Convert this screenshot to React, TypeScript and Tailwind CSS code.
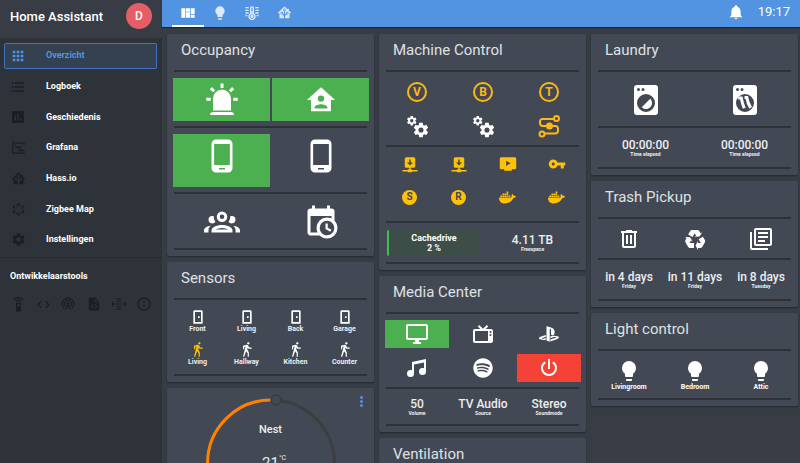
import type { ReactNode } from "react";
import { FaDocker, FaPlaystation, FaSpotify } from "react-icons/fa";
import { MdApps, MdCode, MdFormatListBulleted, MdInfoOutline, MdVpnKey } from "react-icons/md";
import { SiGraphql } from "react-icons/si";

const P = {
  cog: "M12,15.5A3.5,3.5 0 0,1 8.5,12A3.5,3.5 0 0,1 12,8.5A3.5,3.5 0 0,1 15.5,12A3.5,3.5 0 0,1 12,15.5M19.43,12.97C19.47,12.65 19.5,12.33 19.5,12C19.5,11.67 19.47,11.34 19.43,11L21.54,9.37C21.73,9.22 21.78,8.95 21.66,8.73L19.66,5.27C19.54,5.05 19.27,4.96 19.05,5.05L16.56,6.05C16.04,5.66 15.5,5.32 14.87,5.07L14.5,2.42C14.46,2.18 14.25,2 14,2H10C9.75,2 9.54,2.18 9.5,2.42L9.13,5.07C8.5,5.32 7.96,5.66 7.44,6.05L4.95,5.05C4.73,4.96 4.46,5.05 4.34,5.27L2.34,8.73C2.21,8.95 2.27,9.22 2.46,9.37L4.57,11C4.53,11.34 4.5,11.67 4.5,12C4.5,12.33 4.53,12.65 4.57,12.97L2.46,14.63C2.27,14.78 2.21,15.05 2.34,15.27L4.34,18.73C4.46,18.95 4.73,19.03 4.95,18.95L7.44,17.94C7.96,18.34 8.5,18.68 9.13,18.93L9.5,21.58C9.54,21.82 9.75,22 10,22H14C14.25,22 14.46,21.82 14.5,21.58L14.87,18.93C15.5,18.67 16.04,18.34 16.56,17.94L19.05,18.95C19.27,19.03 19.54,18.95 19.66,18.73L21.66,15.27C21.78,15.05 21.73,14.78 21.54,14.63L19.43,12.97Z",
  bulb: "M12,2A7,7 0 0,0 5,9C5,11.38 6.19,13.47 8,14.74V17A1,1 0 0,0 9,18H15A1,1 0 0,0 16,17V14.74C17.81,13.47 19,11.38 19,9A7,7 0 0,0 12,2M9,21A1,1 0 0,0 10,22H14A1,1 0 0,0 15,21V20H9V21Z",
  bell: "M21,19V20H3V19L5,17V11C5,7.9 7.03,5.17 10,4.29C10,4.19 10,4.1 10,4A2,2 0 0,1 12,2A2,2 0 0,1 14,4C14,4.1 14,4.19 14,4.29C16.97,5.17 19,7.9 19,11V17L21,19M14,21A2,2 0 0,1 12,23A2,2 0 0,1 10,21",
  homeAccount: "M12,3L2,12H5V20H19V12H22L12,3M12,8.75A2.25,2.25 0 0,1 14.25,11A2.25,2.25 0 0,1 12,13.25A2.25,2.25 0 0,1 9.75,11A2.25,2.25 0 0,1 12,8.75M12,15C13.5,15 16.5,15.75 16.5,17.25V18H7.5V17.25C7.5,15.75 10.5,15 12,15Z",
  phone: "M17.25,18H6.75V4H17.25M14,21H10V20H14M16,1H8A3,3 0 0,0 5,4V20A3,3 0 0,0 8,23H16A3,3 0 0,0 19,20V4A3,3 0 0,0 16,1Z",
  group: "M12,5A3.5,3.5 0 0,0 8.5,8.5A3.5,3.5 0 0,0 12,12A3.5,3.5 0 0,0 15.5,8.5A3.5,3.5 0 0,0 12,5M12,7A1.5,1.5 0 0,1 13.5,8.5A1.5,1.5 0 0,1 12,10A1.5,1.5 0 0,1 10.5,8.5A1.5,1.5 0 0,1 12,7M5.5,8A2.5,2.5 0 0,0 3,10.5C3,11.44 3.53,12.25 4.29,12.68C4.65,12.88 5.06,13 5.5,13C5.94,13 6.35,12.88 6.71,12.68C7.08,12.47 7.39,12.17 7.62,11.81C6.89,10.86 6.5,9.7 6.5,8.5C6.5,8.41 6.5,8.31 6.5,8.22C6.2,8.08 5.86,8 5.5,8M18.5,8C18.14,8 17.8,8.08 17.5,8.22C17.5,8.31 17.5,8.41 17.5,8.5C17.5,9.7 17.11,10.86 16.38,11.81C16.5,12 16.63,12.15 16.78,12.3C16.94,12.45 17.1,12.58 17.29,12.68C17.65,12.88 18.06,13 18.5,13C18.94,13 19.35,12.88 19.71,12.68C20.47,12.25 21,11.44 21,10.5A2.5,2.5 0 0,0 18.5,8M12,14C9.66,14 5,15.17 5,17.5V19H19V17.5C19,15.17 14.34,14 12,14M4.71,14.55C2.78,14.78 0,15.76 0,17.5V19H3V17.07C3,16.06 3.69,15.22 4.71,14.55M19.29,14.55C20.31,15.22 21,16.06 21,17.07V19H24V17.5C24,15.76 21.22,14.78 19.29,14.55M12,16C13.53,16 15.24,16.5 16.23,17H7.77C8.76,16.5 10.47,16 12,16Z",
  calendarClock: "M15,13H16.5V15.82L18.94,17.23L18.19,18.53L15,16.69V13M19,8H5V19H9.67C9.24,18.09 9,17.07 9,16A7,7 0 0,1 16,9C17.07,9 18.09,9.24 19,9.67V8M5,21C3.89,21 3,20.1 3,19V5C3,3.89 3.89,3 5,3H6V1H8V3H16V1H18V3H19A2,2 0 0,1 21,5V11.1C22.24,12.36 23,14.09 23,16A7,7 0 0,1 16,23C14.09,23 12.36,22.24 11.1,21H5M16,11.15A4.85,4.85 0 0,0 11.15,16C11.15,18.68 13.32,20.85 16,20.85A4.85,4.85 0 0,0 20.85,16C20.85,13.32 18.68,11.15 16,11.15Z",
  walk: "M14.12,10H19V8.2H15.38L13.38,4.87C13.08,4.37 12.54,4.03 11.92,4.03C11.74,4.03 11.58,4.06 11.42,4.11L6,5.8V11H7.8V7.33L9.91,6.67L6,22H7.8L10.67,13.89L13,17V22H14.8V15.59L12.31,11.05L13.04,8.18M14,3.8C15,3.8 15.8,3 15.8,2C15.8,1 15,0.2 14,0.2C13,0.2 12.2,1 12.2,2C12.2,3 13,3.8 14,3.8Z",
  door: "M7,2C5.9,2 5,2.9 5,4V22H19V4C19,2.9 18.1,2 17,2H7M7.500,4.500H16.500V19.500H7.500V4.500M12,11V13.500H14.500V11H12Z",
  alarm: "M6,6.9L3.87,4.78L5.28,3.37L7.4,5.5L6,6.9M13,1V4H11V1H13M20.13,4.78L18,6.9L16.6,5.5L18.72,3.37L20.13,4.78M4.5,10.5V12.5H1.5V10.5H4.5M19.5,10.5H22.5V12.5H19.5V10.5M6,20H18A2,2 0 0,1 20,22H4A2,2 0 0,1 6,20M12,5A6,6 0 0,1 18,11V19H6V11A6,6 0 0,1 12,5Z",
  recycle: "M21.82,15.42L19.32,19.75C18.83,20.61 17.92,21.06 17,21H15V23L12.5,18.5L15,14V16H17.82L15.6,12.15L19.93,9.65L21.73,12.77C22.25,13.54 22.32,14.57 21.82,15.42M9.21,3.06H14.21C15.19,3.06 16.04,3.63 16.45,4.45L17.45,6.19L19.18,5.19L16.54,9.6L11.39,9.69L13.12,8.69L11.71,6.24L9.5,10.09L5.16,7.59L6.96,4.47C7.37,3.64 8.22,3.06 9.21,3.06M5.05,19.76L2.55,15.43C2.06,14.58 2.13,13.56 2.64,12.79L3.64,11.06L1.91,10.06L7.05,10.14L9.7,14.56L7.97,13.56L6.56,16H11V21H7.4C6.47,21.07 5.55,20.61 5.05,19.76Z",
  trash: "M9,3V4H4V6H5V19A2,2 0 0,0 7,21H17A2,2 0 0,0 19,19V6H20V4H15V3H9M7,6H17V19H7V6M9,8V17H11V8H9M13,8V17H15V8H13Z",
  papers: "M16,15H9V13H16V15M19,11H9V9H19V11M19,7H9V5H19V7M3,5V21H19V23H3A2,2 0 0,1 1,21V5H3M21,1A2,2 0 0,1 23,3V17C23,18.11 22.11,19 21,19H7A2,2 0 0,1 5,17V3C5,1.89 5.89,1 7,1H21M7,3V17H21V3H7Z",
  washer: "M14.83,11.17C16.39,12.73 16.39,15.27 14.83,16.83C13.27,18.39 10.73,18.39 9.17,16.83L14.83,11.17M6,2H18A2,2 0 0,1 20,4V20A2,2 0 0,1 18,22H6A2,2 0 0,1 4,20V4A2,2 0 0,1 6,2M7,4A1,1 0 0,0 6,5A1,1 0 0,0 7,6A1,1 0 0,0 8,5A1,1 0 0,0 7,4M10,4A1,1 0 0,0 9,5A1,1 0 0,0 10,6A1,1 0 0,0 11,5A1,1 0 0,0 10,4M12,8A6,6 0 0,0 6,14A6,6 0 0,0 12,20A6,6 0 0,0 18,14A6,6 0 0,0 12,8Z",
  dryer: "M6,2H18A2,2 0 0,1 20,4V20A2,2 0 0,1 18,22H6A2,2 0 0,1 4,20V4A2,2 0 0,1 6,2M7,4A1,1 0 0,0 6,5A1,1 0 0,0 7,6A1,1 0 0,0 8,5A1,1 0 0,0 7,4M10,4A1,1 0 0,0 9,5A1,1 0 0,0 10,6A1,1 0 0,0 11,5A1,1 0 0,0 10,4M12,8A6,6 0 0,0 6,14A6,6 0 0,0 12,20A6,6 0 0,0 18,14A6,6 0 0,0 12,8Z",
  power: "M16.56,5.44L15.11,6.89C16.84,7.94 18,9.83 18,12A6,6 0 0,1 12,18A6,6 0 0,1 6,12C6,9.83 7.16,7.94 8.88,6.88L7.44,5.44C5.36,6.88 4,9.28 4,12A8,8 0 0,0 12,20A8,8 0 0,0 20,12C20,9.28 18.64,6.88 16.56,5.44M13,3H11V13H13",
  monitor: "M21,16H3V4H21M21,2H3C1.89,2 1,2.89 1,4V16A2,2 0 0,0 3,18H10V20H8V22H16V20H14V18H21A2,2 0 0,0 23,16V4C23,2.89 22.1,2 21,2Z",
  tv: "M8.16,3L6.75,4.41L9.34,7H4C2.89,7 2,7.89 2,9V19C2,20.11 2.89,21 4,21H20C21.11,21 22,20.11 22,19V9C22,7.89 21.11,7 20,7H14.66L17.25,4.41L15.84,3L12,6.84L8.16,3M4,9H17V19H4V9M19.5,9A1,1 0 0,1 20.5,10A1,1 0 0,1 19.5,11A1,1 0 0,1 18.5,10A1,1 0 0,1 19.5,9M19.5,12A1,1 0 0,1 20.5,13A1,1 0 0,1 19.5,14A1,1 0 0,1 18.5,13A1,1 0 0,1 19.5,12Z",
  music: "M21,3V15.5A3.5,3.5 0 0,1 17.5,19A3.5,3.5 0 0,1 14,15.5A3.5,3.5 0 0,1 17.5,12C18.04,12 18.55,12.12 19,12.34V6.47L9,8.6V17.5A3.5,3.5 0 0,1 5.5,21A3.5,3.5 0 0,1 2,17.5A3.5,3.5 0 0,1 5.5,14C6.04,14 6.55,14.12 7,14.34V6L21,3Z",
  network: "M17,3A2,2 0 0,1 19,5V15A2,2 0 0,1 17,17H13V19H14A1,1 0 0,1 15,20H22V22H15A1,1 0 0,1 14,23H10A1,1 0 0,1 9,22H2V20H9A1,1 0 0,1 10,19H11V17H7C5.89,17 5,16.1 5,15V5A2,2 0 0,1 7,3H17M12,14L16,10H13V6H11V10H8L12,14Z",
  playTv: "M3,3A2,2 0 0,0 1,5V17A2,2 0 0,0 3,19H7V21H17V19H21A2,2 0 0,0 23,17V5A2,2 0 0,0 21,3H3M9.5,7.5L15.5,11L9.5,14.5V7.5Z",
  assistant: "M21.8,13H20V21H13V17.67L15.79,14.88L16.5,15C17.66,15 18.6,14.06 18.6,12.9C18.6,11.74 17.66,10.8 16.5,10.8A2.1,2.1 0 0,0 14.4,12.9L14.5,13.61L13,15.13V9.65C13.66,9.29 14.1,8.6 14.1,7.8A2.1,2.1 0 0,0 12,5.7A2.1,2.1 0 0,0 9.9,7.8C9.9,8.6 10.34,9.29 11,9.65V15.13L9.5,13.61L9.6,12.9A2.1,2.1 0 0,0 7.5,10.8A2.1,2.1 0 0,0 5.4,12.9A2.1,2.1 0 0,0 7.5,15L8.21,14.88L11,17.67V21H4V13H2.25C1.83,13 1.42,13 1.42,12.79C1.43,12.57 1.85,12.15 2.28,11.72L11,3C11.33,2.67 11.67,2.33 12,2.33C12.33,2.33 12.67,2.67 13,3L17,7V6H19V9L21.78,11.78C22.18,12.18 22.59,12.59 22.6,12.8C22.6,13 22.2,13 21.8,13M7.5,12A0.9,0.9 0 0,1 8.4,12.9A0.9,0.9 0 0,1 7.5,13.8A0.9,0.9 0 0,1 6.6,12.9A0.9,0.9 0 0,1 7.5,12M16.5,12C17,12 17.4,12.4 17.4,12.9C17.4,13.4 17,13.8 16.5,13.8A0.9,0.9 0 0,1 15.6,12.9A0.9,0.9 0 0,1 16.5,12M12,6.9C12.5,6.9 12.9,7.3 12.9,7.8C12.9,8.3 12.5,8.7 12,8.7C11.5,8.7 11.1,8.3 11.1,7.8C11.1,7.3 11.5,6.9 12,6.9Z",
  timeline: "M2,2H4V20H22V22H2V2M7,10H17V13H7V10M11,15H21V18H11V15M6,4H22V8H20V6H8V8H6V4Z",
  poll: "M17,17H15V13H17M13,17H11V7H13M9,17H7V10H9M19,3H5C3.89,3 3,3.89 3,5V19A2,2 0 0,0 5,21H19A2,2 0 0,0 21,19V5C21,3.89 20.1,3 19,3Z",
  remote: "M12,0C8.96,0 6.21,1.23 4.22,3.22L5.63,4.63C7.26,3 9.5,2 12,2C14.5,2 16.74,3 18.36,4.64L19.77,3.23C17.79,1.23 15.04,0 12,0M7.05,6.05L8.46,7.46C9.37,6.56 10.62,6 12,6C13.38,6 14.63,6.56 15.54,7.46L16.95,6.05C15.68,4.78 13.93,4 12,4C10.07,4 8.32,4.78 7.05,6.05M12,15A2,2 0 0,1 10,13A2,2 0 0,1 12,11A2,2 0 0,1 14,13A2,2 0 0,1 12,15M15,9H9A1,1 0 0,0 8,10V22A1,1 0 0,0 9,23H15A1,1 0 0,0 16,22V10A1,1 0 0,0 15,9Z",
  dashboard: "M2,5V19H8V5H2M9,5V10H15V5H9M16,5V14H22V5H16M9,11V19H15V11H9M16,15V19H22V15H16Z",
};

function Icon({ d, className = "size-6" }: { d: string; className?: string }) {
  return (
    <svg viewBox="0 0 24 24" fill="currentColor" fillRule="evenodd" className={className} aria-hidden="true">
      <path d={d} />
    </svg>
  );
}

function Cogs() {
  return (
    <svg viewBox="0 0 24 24" fill="currentColor" className="size-6" aria-hidden="true">
      <path d={P.cog} fillRule="evenodd" transform="translate(1 1) scale(0.48)" />
      <path d={P.cog} fillRule="evenodd" transform="translate(7.2 7.2) scale(0.73)" />
    </svg>
  );
}

function Route() {
  return (
    <svg viewBox="0 0 24 24" fill="none" stroke="currentColor" strokeWidth="2" className="size-6" aria-hidden="true">
      <path d="M17,5H6A2.500,2.500 0 0,0 3,7.500V9.500A2.500,2.500 0 0,0 5.500,12H18.500A2.500,2.500 0 0,1 21,14.500V17A2.500,2.500 0 0,1 18.500,19.500H8" />
      <circle cx="19.500" cy="4.500" r="2.500" />
      <circle cx="5" cy="20" r="2.500" />
      <circle cx="12.500" cy="12" r="2.500" fill="currentColor" />
    </svg>
  );
}

function Dryer() {
  return (
    <svg viewBox="0 0 24 24" fill="currentColor" className="size-9" aria-hidden="true">
      <path d={P.dryer} fillRule="evenodd" />
      <path
        d="M7.500,10.700H9.500C10,13.500 10.200,14.500 11.500,17.500M11.700,10.300H13.200C13.700,13.500 14,14.500 15.800,17.200"
        fill="none"
        stroke="currentColor"
        strokeWidth="2"
      />
    </svg>
  );
}

function Thermometer() {
  return (
    <svg viewBox="0 0 24 24" className="size-4" fill="none" stroke="currentColor" strokeWidth="2" aria-hidden="true">
      <path d="M10,13V5A2,2 0 0,1 14,5V13A4.500,4.500 0 1,1 10,13Z" />
      <path d="M12,9V17" />
      <circle cx="12" cy="17" r="1.500" fill="currentColor" />
      <path d="M2,4H7M2,8H7M2,12H7M2,16H5M17,4H22M17,8H22M17,12H22M19,16H22" />
    </svg>
  );
}

function Broadcast() {
  return (
    <svg viewBox="0 0 24 24" className="size-3.5" fill="none" stroke="currentColor" strokeWidth="2" aria-hidden="true">
      <path d="M5,19A10,10 0 1,1 19,19M8,16A6,6 0 1,1 16,16M12,12L8,22M12,12L16,22" />
      <circle cx="12" cy="11" r="1.500" fill="currentColor" />
    </svg>
  );
}

function FileCode() {
  return (
    <svg viewBox="0 0 24 24" className="size-3.5" fill="currentColor" fillRule="evenodd" aria-hidden="true">
      <path d="M14,1H5A2,2 0 0,0 3,3V21A2,2 0 0,0 5,23H19A2,2 0 0,0 21,21V8L14,1M13,3L19,9H13V3M10,12L11.300,13.300L8.800,16L11.300,18.700L10,20L6.200,16L10,12M14,12L17.800,16L14,20L12.700,18.700L15.200,16L12.700,13.300L14,12Z" />
    </svg>
  );
}

function Merge() {
  return (
    <svg viewBox="0 0 24 24" className="size-3.5" fill="currentColor" aria-hidden="true">
      <path d="M8,2H16V4H8V2M9,6H15V8H9V6M7,11H17V13H7V11M9,16H15V18H9V16M8,20H16V22H8V20M0,8L5,12L0,16V8M24,8L19,12L24,16V8Z" />
    </svg>
  );
}

function Letter({ children, filled }: { children: string; filled?: boolean }) {
  return filled ? (
    <span className="flex size-[15px] shrink-0 items-center justify-center rounded-full bg-[#ffc107] text-[10px] leading-none font-bold text-[#434954]">
      {children}
    </span>
  ) : (
    <span className="flex size-5 items-center justify-center rounded-full border-2 border-[#fdb813] text-[12px] leading-none font-bold text-[#fdb813]">
      {children}
    </span>
  );
}

function Divider() {
  return <hr className="mt-[5px] mr-0.5 mb-1.5 ml-px h-0.5 border-0 bg-[#2e3238]" />;
}

function Card({ title, children }: { title?: string; children?: ReactNode }) {
  return (
    <section className="flow-root rounded-xs bg-[#434954] pr-[5px] pl-1.5 shadow-[0_1px_2px_rgba(0,0,0,0.35)]">
      {title && <h2 className="px-2 pt-1 pb-[3px] text-[15px] leading-6 text-[#dfe1e4]">{title}</h2>}
      {children}
    </section>
  );
}

function Tile({ label, className = "h-7", children }: { label: string; className?: string; children: ReactNode }) {
  return (
    <button type="button" aria-label={label} className={`flex items-center justify-center text-white ${className}`}>
      {children}
    </button>
  );
}

function Small({ label, children }: { label: string; children: ReactNode }) {
  return (
    <button type="button" aria-label={label} className="flex h-[30px] items-start justify-center pt-[3px] text-[#ffc107]">
      <span className="flex size-4 items-center justify-center">{children}</span>
    </button>
  );
}

function Sensor({ label, icon, active }: { label: string; icon: string; active?: boolean }) {
  return (
    <button
      type="button"
      className={`flex h-[30px] flex-col items-center pt-[3px] text-[7px] leading-2 font-bold ${active ? "text-[#ffc107]" : "text-white"}`}
    >
      <Icon d={icon} className="size-4" />
      <span className="text-[#eceef0]">{label}</span>
    </button>
  );
}

function Stat({ value, label }: { value: string; label: string }) {
  return (
    <div className="flex flex-col items-center justify-center whitespace-nowrap text-[#eceef0]">
      <span className="text-[12px] leading-[13px] font-medium">{value}</span>
      <span className="text-[5px] leading-[5px] font-bold">{label}</span>
    </div>
  );
}

const nav: [string, ReactNode][] = [
  ["Overzicht", <MdApps className="size-4" />],
  ["Logboek", <MdFormatListBulleted className="size-4" />],
  ["Geschiedenis", <Icon d={P.poll} className="size-4" />],
  ["Grafana", <Icon d={P.timeline} className="size-[15px]" />],
  ["Hass.io", <Icon d={P.assistant} className="size-[15px]" />],
  ["Zigbee Map", <SiGraphql className="size-[13px]" />],
  ["Instellingen", <Icon d={P.cog} className="size-[15px]" />],
];

const tools: [string, ReactNode][] = [
  ["Services", <Icon d={P.remote} className="size-[15px]" />],
  ["States", <MdCode className="size-[15px]" />],
  ["Events", <Broadcast />],
  ["Templates", <FileCode />],
  ["MQTT", <Merge />],
  ["Info", <MdInfoOutline className="size-4" />],
];

function Sidebar() {
  return (
    <aside className="w-[162px] shrink-0 bg-[#2e333a]">
      <div className="flex h-[38px] items-start justify-between bg-[#383c45] pt-[3px] pr-2.5 pl-2.5">
        <h1 className="pt-1 text-[13px] leading-5 font-medium text-white">Home Assistant</h1>
        <button type="button" className="size-[26px] rounded-full bg-[#e45e65] text-[12px] font-medium text-white">
          D
        </button>
      </div>
      <nav className="mt-[5px] mr-[5px] ml-1 flex h-[210px] flex-col justify-between">
        {nav.map(([label, icon], i) => (
          <a
            key={label}
            href="#"
            className={`flex h-[26px] items-center rounded-xs border pl-[5px] text-[9px] font-bold ${
              i === 0 ? "border-[#4273c4] bg-[#334150] text-[#5294e2]" : "border-transparent text-[#1b1e22]"
            }`}
          >
            <span className="flex w-4 justify-center">{icon}</span>
            <span className={`ml-5 ${i === 0 ? "" : "text-white"}`}>{label}</span>
          </a>
        ))}
      </nav>
      <hr className="mt-1 border-[#292d33]" />
      <h2 className="mt-3 ml-2.5 text-[9px] leading-3 font-bold text-white">Ontwikkelaarstools</h2>
      <div className="mt-3.5 flex justify-between px-2.5 text-[#1b1e22]">
        {tools.map(([label, icon]) => (
          <button key={label} type="button" aria-label={label} className="flex size-4 items-center justify-center">
            {icon}
          </button>
        ))}
      </div>
    </aside>
  );
}

function TopBar() {
  const tabs: [string, ReactNode][] = [
    ["Dashboard", <Icon d={P.dashboard} className="size-4" />],
    ["Lights", <Icon d={P.bulb} className="size-4" />],
    ["Climate", <Thermometer />],
    ["Home", <Icon d={P.assistant} className="size-[15px]" />],
  ];
  return (
    <header className="flex h-[27px] items-center bg-[#5294e2] pr-2.5 pl-2.5 text-white shadow-[0_1px_1px_rgba(0,0,0,0.4)]">
      <div role="tablist" className="flex h-full grow">
        {tabs.map(([label, icon], i) => (
          <button
            key={label}
            type="button"
            role="tab"
            aria-selected={i === 0}
            aria-label={label}
            className={`flex w-8 items-center justify-center border-b-2 ${i === 0 ? "border-white" : "border-transparent text-[#dce9f9]"}`}
          >
            {icon}
          </button>
        ))}
      </div>
      <button type="button" aria-label="Notifications" className="mr-3.5 pb-1">
        <Icon d={P.bell} className="size-4" />
      </button>
      <time className="pb-1 text-[13px] leading-5">19:17</time>
    </header>
  );
}

function Thermostat() {
  return (
    <div className="relative -mr-[5px] -ml-1.5 h-36 text-center text-[#eceef0]">
      <svg viewBox="0 0 208 144" className="mx-auto block h-36 w-[208px]" fill="none" aria-hidden="true">
        <path d="M104,12A63.500,63.500 0 0,1 104,139" stroke="#3d3e40" strokeWidth="3" />
        <path d="M104,139A63.500,63.500 0 0,1 104,12" stroke="#ff8100" strokeWidth="3" />
        <circle cx="109" cy="12" r="5" fill="#434954" stroke="#393c42" strokeWidth="1.500" />
      </svg>
      <div className="absolute inset-x-0 top-[34px] text-[11px] leading-4 font-medium">Nest</div>
      <div className="absolute inset-x-0 top-[65px] text-[15px] leading-5">
        21<sup className="absolute top-px text-[7px] leading-2">°C</sup>
      </div>
      <button type="button" aria-label="More options" className="absolute top-2 right-[11px] flex flex-col gap-px">
        <i className="size-[3px] rounded-full bg-[#5294e2]" />
        <i className="size-[3px] rounded-full bg-[#5294e2]" />
        <i className="size-[3px] rounded-full bg-[#5294e2]" />
      </button>
    </div>
  );
}

const column = "flex min-w-0 flex-col gap-1.5";
const three = "grid grid-cols-3 gap-x-0.5 gap-y-1.5";

export default function App() {
  return (
    <div className="flex h-screen overflow-hidden bg-[#383c45] font-[Roboto,sans-serif]">
      <Sidebar />
      <div className="min-w-0 grow">
        <TopBar />
        <main className="grid grid-cols-3 items-start gap-[5px] pt-[7px] pr-0.5 pl-[5px]">
          <div className={column}>
            <Card title="Occupancy">
              <Divider />
              <div className="grid grid-cols-2 gap-x-0.5">
                <Tile label="Alarm" className="h-[43px] bg-[#4caf50]"><Icon d={P.alarm} className="size-9" /></Tile>
                <Tile label="Home" className="h-[43px] bg-[#4caf50]"><Icon d={P.homeAccount} className="size-[34px]" /></Tile>
              </div>
              <Divider />
              <div className="grid grid-cols-2 gap-x-0.5">
                <Tile label="Phone 1" className="h-[53px] bg-[#4caf50] pb-2.5"><Icon d={P.phone} className="size-9" /></Tile>
                <Tile label="Phone 2" className="h-[53px] pb-2.5"><Icon d={P.phone} className="size-9" /></Tile>
              </div>
              <Divider />
              <div className="grid grid-cols-2 gap-x-0.5">
                <Tile label="Guests" className="h-[43px]"><Icon d={P.group} className="size-9" /></Tile>
                <Tile label="Schedule" className="h-[43px]"><Icon d={P.calendarClock} className="size-9" /></Tile>
              </div>
              <Divider />
            </Card>
            <Card title="Sensors">
              <Divider />
              <div className="grid grid-cols-4 gap-y-[3px]">
                {["Front", "Living", "Back", "Garage"].map((n) => <Sensor key={n} label={n} icon={P.door} />)}
                {["Living", "Hallway", "Kitchen", "Counter"].map((n) => (
                  <Sensor key={n} label={n} icon={P.walk} active={n === "Living"} />
                ))}
              </div>
              <Divider />
            </Card>
            <Card><Thermostat /></Card>
          </div>

          <div className={column}>
            <Card title="Machine Control">
              <Divider />
              <div className={three}>
                <Tile label="V"><Letter>V</Letter></Tile>
                <Tile label="B"><Letter>B</Letter></Tile>
                <Tile label="T"><Letter>T</Letter></Tile>
                <Tile label="Settings V"><Cogs /></Tile>
                <Tile label="Settings B"><Cogs /></Tile>
                <Tile label="Route"><span className="text-[#fdb813]"><Route /></span></Tile>
              </div>
              <Divider />
              <div className="grid grid-cols-4 gap-y-[3px]">
                <Small label="Download 1"><Icon d={P.network} className="size-[18px] shrink-0" /></Small>
                <Small label="Download 2"><Icon d={P.network} className="size-[18px] shrink-0" /></Small>
                <Small label="Media"><Icon d={P.playTv} className="size-[18px] shrink-0" /></Small>
                <Small label="VPN"><MdVpnKey className="size-[18px] shrink-0" /></Small>
                <Small label="S"><Letter filled>S</Letter></Small>
                <Small label="R"><Letter filled>R</Letter></Small>
                <Small label="Docker 1"><FaDocker className="size-[17px] shrink-0" /></Small>
                <Small label="Docker 2"><FaDocker className="size-[17px] shrink-0" /></Small>
              </div>
              <Divider />
              <div className="grid h-7 grid-cols-2 gap-x-0.5">
                <div className="my-px mr-[3px] ml-0.5 flex flex-col items-center justify-center rounded-xs border-l-2 border-[#3fc24a] bg-[#3d4d48] text-[9px] leading-[10px] font-bold text-white">
                  <span>Cachedrive</span>
                  <span>2 %</span>
                </div>
                <Stat value="4.11 TB" label="Freespace" />
              </div>
              <Divider />
            </Card>
            <Card title="Media Center">
              <Divider />
              <div className={three}>
                <Tile label="Monitor" className="h-7 bg-[#4caf50]"><Icon d={P.monitor} /></Tile>
                <Tile label="TV"><Icon d={P.tv} /></Tile>
                <Tile label="Playstation"><FaPlaystation className="size-5" /></Tile>
                <Tile label="Music"><Icon d={P.music} /></Tile>
                <Tile label="Spotify"><FaSpotify className="size-5" /></Tile>
                <Tile label="Power" className="h-7 bg-[#f44336]"><Icon d={P.power} /></Tile>
              </div>
              <Divider />
              <div className="grid h-6 grid-cols-3 gap-x-0.5">
                <Stat value="50" label="Volume" />
                <Stat value="TV Audio" label="Source" />
                <Stat value="Stereo" label="Soundmode" />
              </div>
              <Divider />
            </Card>
            <Card title="Ventilation"><Divider /></Card>
          </div>

          <div className={column}>
            <Card title="Laundry">
              <Divider />
              <div className="grid grid-cols-2 gap-x-0.5">
                <Tile label="Washing machine" className="h-[43px]"><Icon d={P.washer} className="size-9" /></Tile>
                <Tile label="Dryer" className="h-[43px]"><Dryer /></Tile>
              </div>
              <Divider />
              <div className="grid h-7 grid-cols-2 gap-x-0.5">
                <Stat value="00:00:00" label="Time elapsed" />
                <Stat value="00:00:00" label="Time elapsed" />
              </div>
              <Divider />
            </Card>
            <Card title="Trash Pickup">
              <Divider />
              <div className={three}>
                <Tile label="Trash"><Icon d={P.trash} /></Tile>
                <Tile label="Recycling"><Icon d={P.recycle} /></Tile>
                <Tile label="Paper"><Icon d={P.papers} /></Tile>
              </div>
              <Divider />
              <div className="grid h-7 grid-cols-3 gap-x-0.5">
                <Stat value="in 4 days" label="Friday" />
                <Stat value="in 11 days" label="Friday" />
                <Stat value="in 8 days" label="Tuesday" />
              </div>
              <Divider />
            </Card>
            <Card title="Light control">
              <Divider />
              <div className="grid grid-cols-3 gap-x-0.5">
                {["Livingroom", "Bedroom", "Attic"].map((n) => (
                  <button key={n} type="button" className="flex h-9 flex-col items-center pt-0.5 text-[7px] leading-2 font-bold text-white">
                    <Icon d={P.bulb} />
                    <span>{n}</span>
                  </button>
                ))}
              </div>
              <Divider />
            </Card>
          </div>
        </main>
      </div>
    </div>
  );
}
